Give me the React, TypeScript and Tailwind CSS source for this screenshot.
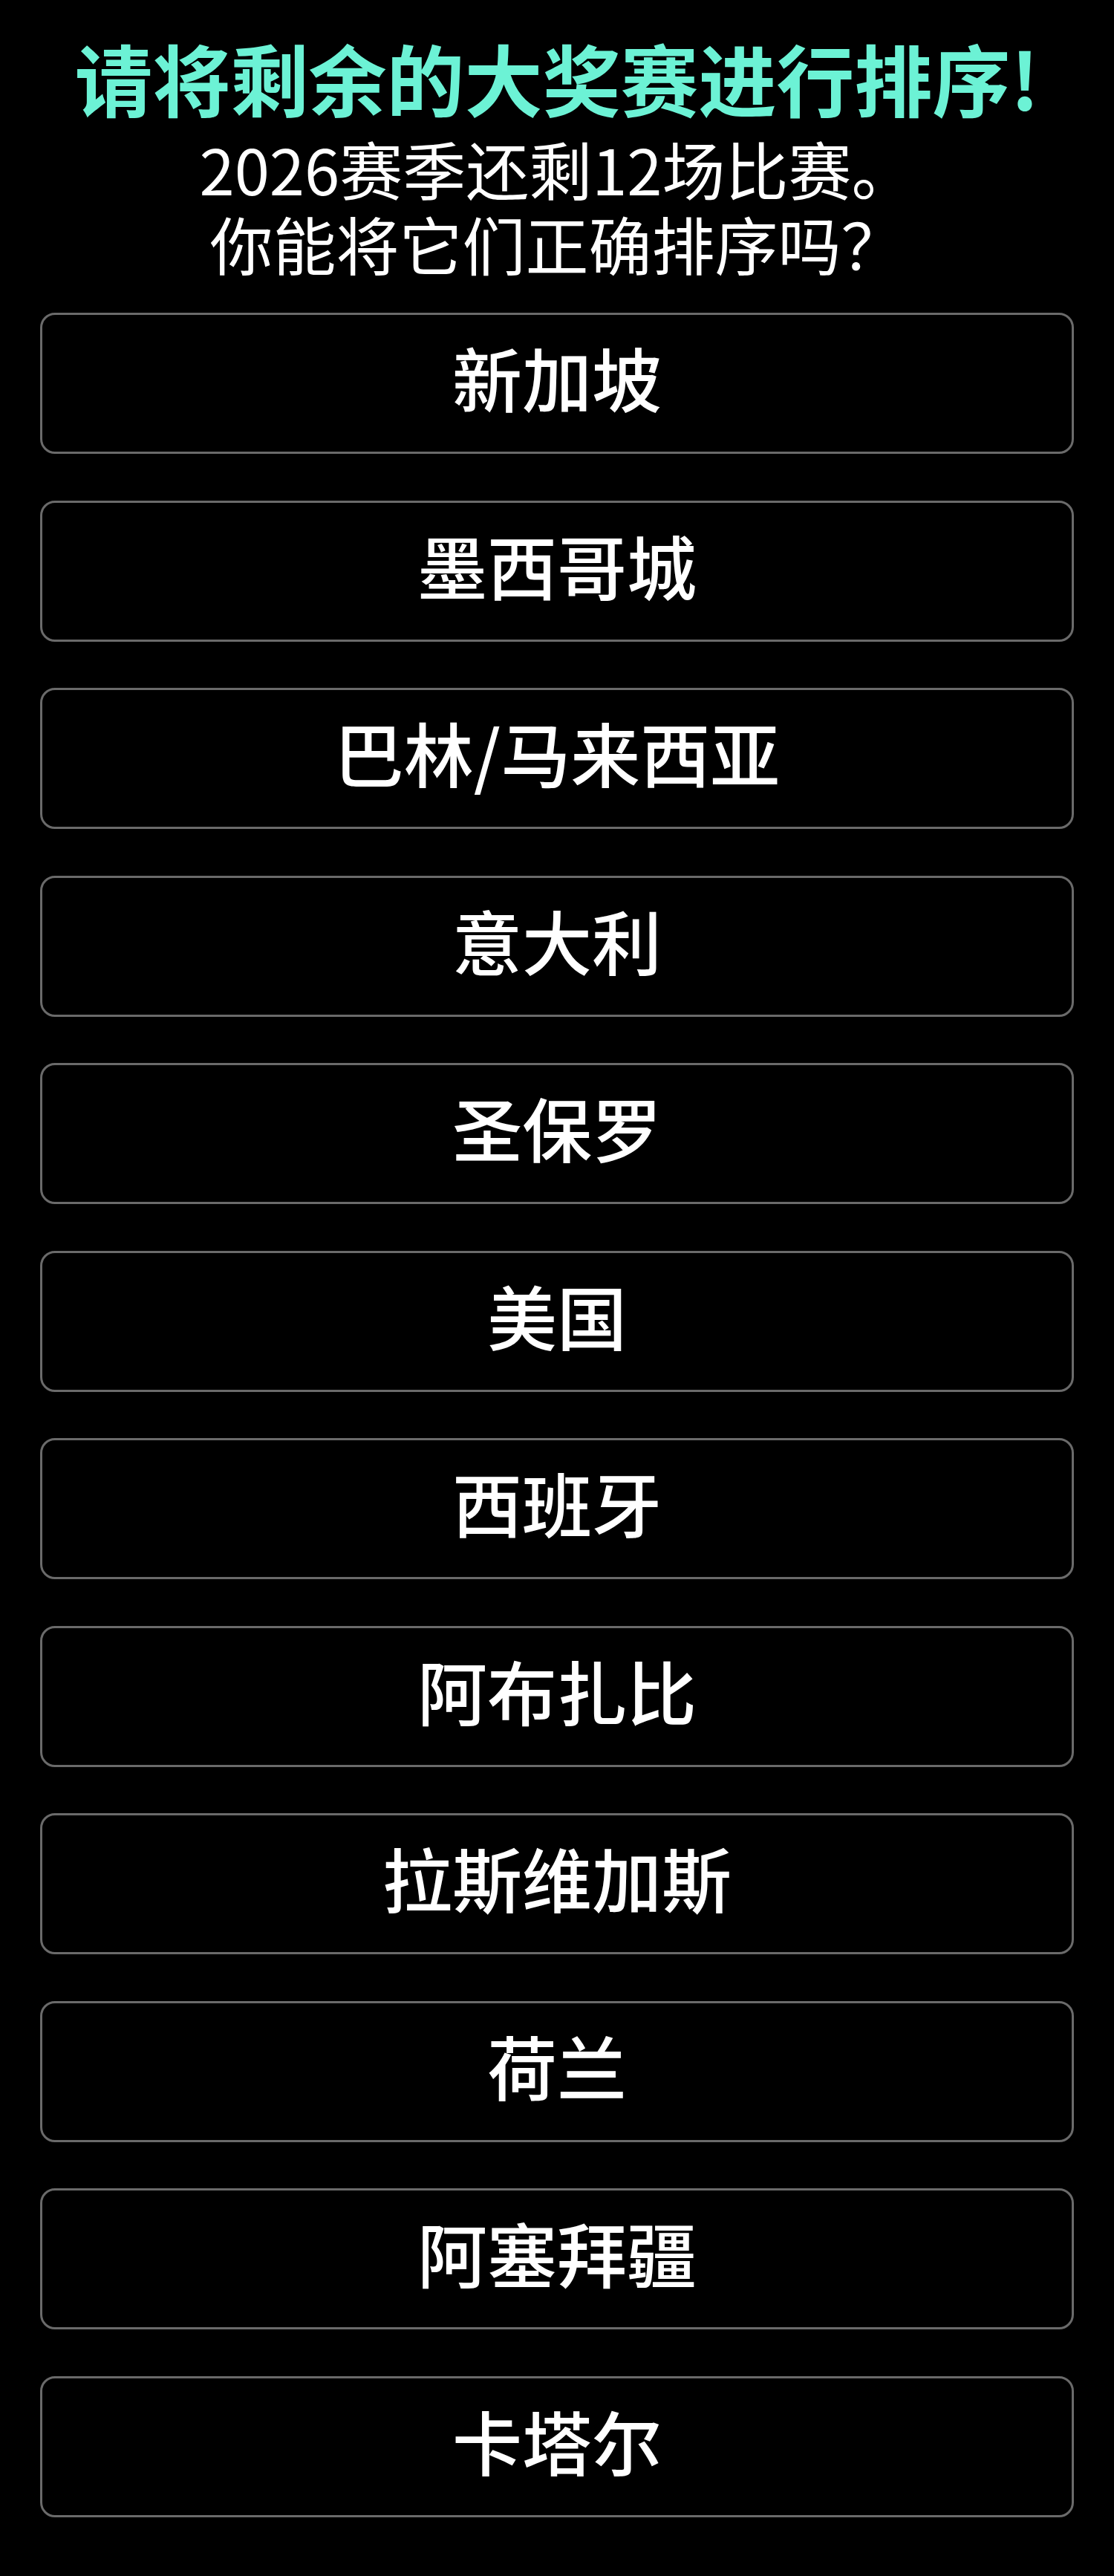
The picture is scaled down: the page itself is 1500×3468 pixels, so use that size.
const races = [
  "新加坡",
  "墨西哥城",
  "巴林/马来西亚",
  "意大利",
  "圣保罗",
  "美国",
  "西班牙",
  "阿布扎比",
  "拉斯维加斯",
  "荷兰",
  "阿塞拜疆",
  "卡塔尔",
];

export default function App() {
  return (
    <div className="min-h-screen bg-black font-['Noto_Sans_CJK_SC',sans-serif]">
      <div className="flex flex-col items-center pt-[43px] text-center">
        <h1 className="text-[105px] font-bold leading-[120px] text-[#6cf2d5]">
          请将剩余的大奖赛进行排序!
        </h1>
        <div className="mt-[12px] text-[85px] font-normal leading-[101px] text-white">
          <p>2026赛季还剩12场比赛。</p>
          <p>你能将它们正确排序吗？</p>
        </div>
      </div>

      {/* 排序列表 */}
      <div className="mx-[54px] mt-[44px] flex flex-col gap-[62.5px]">
        {races.map((race) => (
          <div
            key={race}
            className="flex h-[190px] items-center justify-center rounded-[20px] border-[3px] border-[#6a6a6a] bg-black pb-[18px]"
          >
            <span className="text-[94px] font-medium leading-none text-white">
              {race}
            </span>
          </div>
        ))}
      </div>
    </div>
  );
}
